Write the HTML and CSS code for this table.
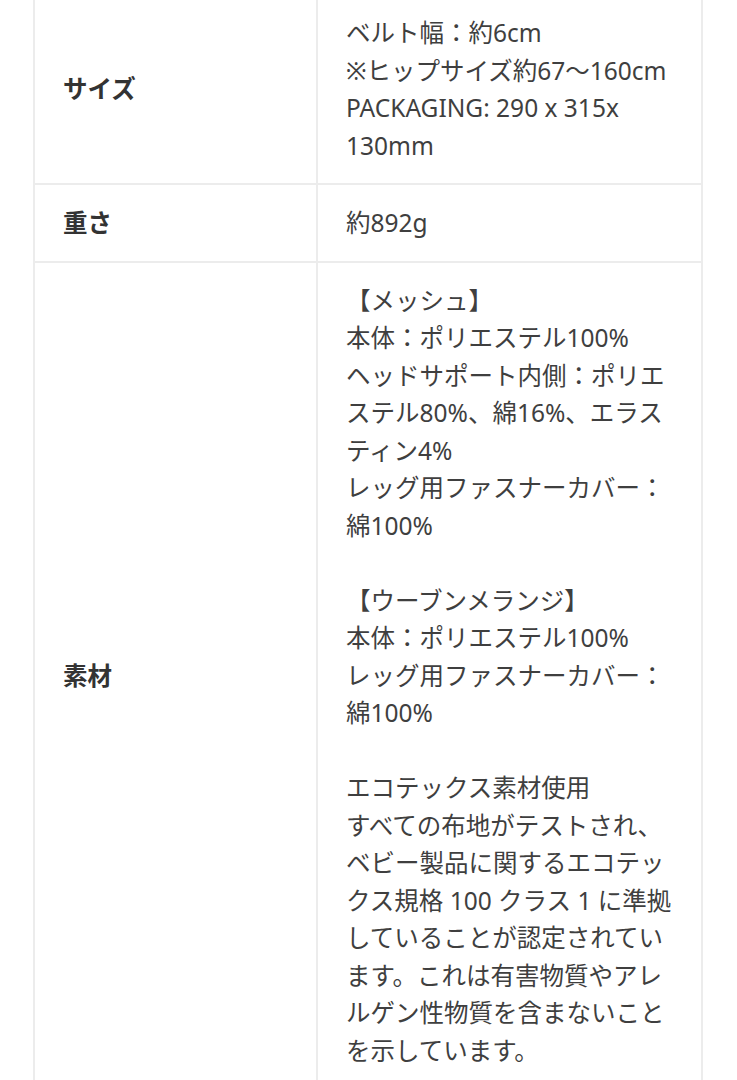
FILE: index.html
```html
<!DOCTYPE html>
<html lang="ja">
<head>
<meta charset="utf-8">
<link rel="stylesheet" href="styles.css">
</head>
<body>
<div class="page">
<table class="spec">
<tr>
<th>サイズ</th>
<td>ベルト幅：約6cm<br>※ヒップサイズ約67〜160cm<br>PACKAGING: 290 x 315x 130mm</td>
</tr>
<tr>
<th>重さ</th>
<td>約892g</td>
</tr>
<tr>
<th>素材</th>
<td>【メッシュ】<br>本体：ポリエステル100%<br>ヘッドサポート内側：ポリエステル80%、綿16%、エラスティン4%<br>レッグ用ファスナーカバー：綿100%<br><br>【ウーブンメランジ】<br>本体：ポリエステル100%<br>レッグ用ファスナーカバー：綿100%<br><br>エコテックス素材使用<br>すべての布地がテストされ、ベビー製品に関するエコテックス規格 100 クラス 1 に準拠していることが認定されています。これは有害物質やアレルゲン性物質を含まないことを示しています。</td>
</tr>
</table>
</div>
</body>
</html>
```
FILE: styles.css
```css
html, body {
  margin: 0;
  padding: 0;
  background: #ffffff;
}
.page {
  padding: 0 34px 0 33px;
  margin-top: -7px;
  font-family: "Noto Sans", "Noto Sans CJK JP", sans-serif;
}
.spec {
  width: 100%;
  border-collapse: collapse;
  table-layout: fixed;
}
.spec th, .spec td {
  border: 2px solid #ececec;
  font-size: 24.5px;
  line-height: 37.5px;
  padding: 19px 28px;
  vertical-align: middle;
  text-align: left;
}
.spec th {
  width: 225px;
  color: #333333;
  font-weight: 700;
}
.spec td {
  padding-right: 20px;
  color: #3f3f3f;
  font-weight: 400;
}
```
